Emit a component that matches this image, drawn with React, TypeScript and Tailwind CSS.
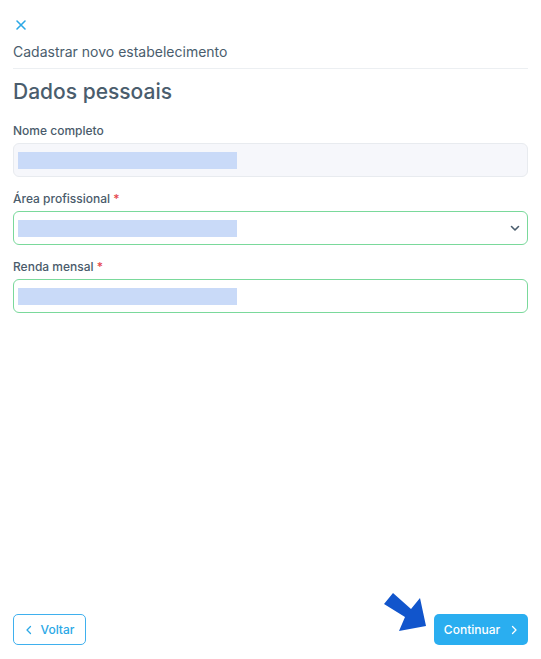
import React from 'react';

const font = { fontFamily: 'Inter, "Noto Sans", sans-serif' };

function Label({ text, required }: { text: string; required?: boolean }) {
  return (
    <div className="text-[12px] font-medium text-[#4a5b6b] mb-[4px] leading-[16px]">
      {text}
      {required && <span className="text-[#e5484d]"> *</span>}
    </div>
  );
}

function Highlight() {
  return <div className="h-[17px] w-[219px] bg-[#c9daf8]" />;
}

export default function App() {
  return (
    <div className="relative w-[541px] h-[659px] bg-white flex flex-col px-[13px]" style={font}>
      <div className="pt-[18px]">
        <button className="text-[#2ba8e6] w-[14px] h-[14px] ml-[1px] flex items-center justify-center">
          <svg width="12" height="12" viewBox="0 0 12 12" fill="none" stroke="currentColor" strokeWidth="1.6" strokeLinecap="round">
            <path d="M2 2l8 8M10 2l-8 8" />
          </svg>
        </button>
      </div>
      <div className="mt-[11px] text-[14px] text-[#4a5d6d] leading-[18px] pb-[7px] border-b border-[#eceff2]">
        Cadastrar novo estabelecimento
      </div>
      <h1 className="mt-[10px] text-[21px] font-medium text-[#4a5d6d] leading-[26px]">Dados pessoais</h1>

      <div className="mt-[18px]">
        <Label text="Nome completo" />
        <div className="h-[34px] rounded-[6px] border border-[#e8ebef] bg-[#f6f7fb] flex items-center px-[4px]">
          <Highlight />
        </div>
      </div>

      <div className="mt-[14px]">
        <Label text="Área profissional" required />
        <div className="h-[34px] rounded-[6px] border border-[#7ad99b] bg-white flex items-center justify-between pl-[4px] pr-[6px]">
          <Highlight />
          <svg width="12" height="12" viewBox="0 0 12 12" fill="none" stroke="#4a5d6d" strokeWidth="1.6" strokeLinecap="round" strokeLinejoin="round">
            <path d="M2.5 4.5L6 8l3.5-3.5" />
          </svg>
        </div>
      </div>

      <div className="mt-[14px]">
        <Label text="Renda mensal" required />
        <div className="h-[34px] rounded-[6px] border border-[#7ad99b] bg-white flex items-center px-[4px]">
          <Highlight />
        </div>
      </div>

      <div className="flex-1" />

      <div className="flex justify-between items-center pb-[14px]">
        <button className="h-[31px] w-[73px] rounded-[5px] border border-[#3fb0ee] text-[#2ba8e6] text-[12px] font-medium flex items-center justify-center gap-[8px]">
          <svg width="8" height="10" viewBox="0 0 8 10" fill="none" stroke="currentColor" strokeWidth="1.3" strokeLinecap="round" strokeLinejoin="round">
            <path d="M5.5 1.5L2 5l3.5 3.5" />
          </svg>
          Voltar
        </button>
        <button className="h-[31px] w-[94px] rounded-[5px] bg-[#2aaef0] text-white text-[12px] font-medium flex items-center justify-center gap-[10px]">
          Continuar
          <svg width="8" height="10" viewBox="0 0 8 10" fill="none" stroke="currentColor" strokeWidth="1.3" strokeLinecap="round" strokeLinejoin="round">
            <path d="M2.5 1.5L6 5 2.5 8.5" />
          </svg>
        </button>
      </div>

      <svg className="absolute left-[380px] top-[588px]" width="52" height="48" viewBox="380 588 52 48">
        <polygon points="384,604 393,593 411,609 420,598 426,626 399,631 405,617" fill="#1155cc" />
      </svg>
    </div>
  );
}
